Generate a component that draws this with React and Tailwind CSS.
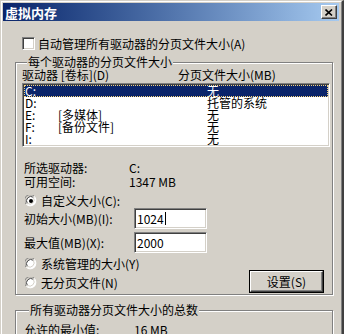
import React from 'react';

const DRIVES = [
  { letter: 'C:', label: '', size: '无', selected: true },
  { letter: 'D:', label: '', size: '托管的系统' },
  { letter: 'E:', label: '[多媒体]', size: '无' },
  { letter: 'F:', label: '[备份文件]', size: '无' },
  { letter: 'I:', label: '', size: '无' },
];

const Radio = ({ checked }) => (
  <svg width="12" height="12" viewBox="0 0 12 12" className="shrink-0">
    <circle cx="6" cy="6" r="5" fill="#fff" />
    <path d="M1.2 9.2 A5.5 5.5 0 0 1 9.2 1.2" stroke="#808080" strokeWidth="1" fill="none" />
    <path d="M9.2 1.2 A5.5 5.5 0 0 1 1.2 9.2" stroke="#ffffff" strokeWidth="1" fill="none" />
    <path d="M2.3 8.3 A4.3 4.3 0 0 1 8.3 2.3" stroke="#404040" strokeWidth="1" fill="none" />
    <path d="M8.3 2.3 A4.3 4.3 0 0 1 2.3 8.3" stroke="#d4d0c8" strokeWidth="1" fill="none" />
    {checked && <circle cx="6" cy="6" r="2" fill="#000" />}
  </svg>
);

const Sunken = ({ className = '', children }) => (
  <div className={`border border-t-[#808080] border-l-[#808080] border-b-white border-r-white shadow-[inset_1px_1px_0_#404040,inset_-1px_-1px_0_#d4d0c8] bg-white ${className}`}>
    {children}
  </div>
);

export default function App() {
  return (
    <div className="w-[344px] h-[334px] overflow-hidden bg-[#d4d0c8] border-l border-t border-l-[#d4d0c8] border-t-[#d4d0c8] border-r-2 border-r-[#404040] font-['Noto_Sans_CJK_SC',sans-serif] text-[12px] leading-[12px] text-black">
      <div className="h-full border-l border-t border-l-white border-t-white border-r border-r-[#808080] pl-px pt-px pr-[2px]">
        {/* title bar */}
        <div className="h-[18px] flex items-center justify-between bg-linear-to-r from-[#0a246a] to-[#a6caf0]">
          <span className="pl-[2px] text-white font-bold text-[13px] leading-[13px]">虚拟内存</span>
          <button className="w-[16px] h-[14px] mr-[2px] bg-[#d4d0c8] border border-t-white border-l-white border-b-[#404040] border-r-[#404040] shadow-[inset_-1px_-1px_0_#808080] flex items-center justify-center">
            <svg width="8" height="7" viewBox="0 0 8 7">
              <path d="M0.5 0.5 L7 6.5 M7 0.5 L0.5 6.5" stroke="#000" strokeWidth="1.6" />
            </svg>
          </button>
        </div>

        <div className="pl-[12px] pr-[6px]">
          {/* auto manage checkbox */}
          <div className="mt-[16px] flex items-center ml-[7px] h-[13px]">
            <Sunken className="w-[13px] h-[13px] shrink-0" />
            <span className="ml-[3px]">自动管理所有驱动器的分页文件大小(A)</span>
          </div>

          {/* per drive group */}
          <fieldset className="mt-[6px] border border-[#808080] shadow-[inset_1px_1px_0_#fff,1px_1px_0_#fff] pl-[6px] pr-[2px] pb-px">
            <legend className="ml-[5px] px-px bg-[#d4d0c8]">每个驱动器的分页文件大小</legend>
            <div className="mt-px flex h-[12px]">
              <span className="w-[156px]">驱动器 [卷标](D)</span>
              <span>分页文件大小(MB)</span>
            </div>
            <Sunken className="mt-[2px] h-[64px] p-px">
              {DRIVES.map(d => (
                <div key={d.letter} className={`grid grid-cols-[33px_149px_1fr] h-[12px] pl-px ${d.selected ? 'bg-[#0a246a] text-white outline-1 outline-dotted outline-[#f5d47a] -outline-offset-1' : ''}`}>
                  <span>{d.letter}</span>
                  <span>{d.label}</span>
                  <span>{d.size}</span>
                </div>
              ))}
            </Sunken>

            <div className="ml-[2px] mt-[15px] flex h-[12px]">
              <span className="w-[105px]">所选驱动器:</span>
              <span>C:</span>
            </div>
            <div className="ml-[2px] mt-[2px] flex h-[12px]">
              <span className="w-[105px]">可用空间:</span>
              <span>1347 MB</span>
            </div>

            <div className="ml-[3px] mt-[7px] flex items-center h-[12px] gap-[4px]">
              <Radio checked />
              <span>自定义大小(C):</span>
            </div>
            <div className="ml-[2px] mt-[1px] flex items-center h-[21px]">
              <span className="w-[110px]">初始大小(MB)(I):</span>
              <Sunken className="w-[73px] h-[21px] flex items-center pl-[2px]">
                <span>1024</span>
                <span className="w-px h-[13px] bg-black ml-px" />
              </Sunken>
            </div>
            <div className="ml-[2px] mt-[3px] flex items-center h-[21px]">
              <span className="w-[110px]">最大值(MB)(X):</span>
              <Sunken className="w-[73px] h-[21px] flex items-center pl-[2px]">
                <span>2000</span>
              </Sunken>
            </div>

            <div className="flex items-end justify-between mt-[5px]">
              <div className="ml-[3px] flex flex-col gap-[7px] pb-[4px]">
                <div className="flex items-center h-[12px] gap-[4px]">
                  <Radio />
                  <span>系统管理的大小(Y)</span>
                </div>
                <div className="flex items-center h-[12px] gap-[4px]">
                  <Radio />
                  <span>无分页文件(N)</span>
                </div>
              </div>
              <button className="w-[75px] h-[23px] mr-[6px] border border-black bg-[#d4d0c8]">
                <div className="h-full border border-t-white border-l-white border-b-[#404040] border-r-[#404040] shadow-[inset_-1px_-1px_0_#808080] flex items-center justify-center">
                  设置(S)
                </div>
              </button>
            </div>
          </fieldset>

          {/* totals group */}
          <fieldset className="mt-[9px] border border-[#808080] shadow-[inset_1px_1px_0_#fff,1px_1px_0_#fff] pl-[8px] h-[80px]">
            <legend className="ml-[5px] px-px bg-[#d4d0c8]">所有驱动器分页文件大小的总数</legend>
            <div className="mt-[8px] flex h-[12px]">
              <span className="w-[110px]">允许的最小值:</span>
              <span>16 MB</span>
            </div>
          </fieldset>
        </div>
      </div>
    </div>
  );
}
